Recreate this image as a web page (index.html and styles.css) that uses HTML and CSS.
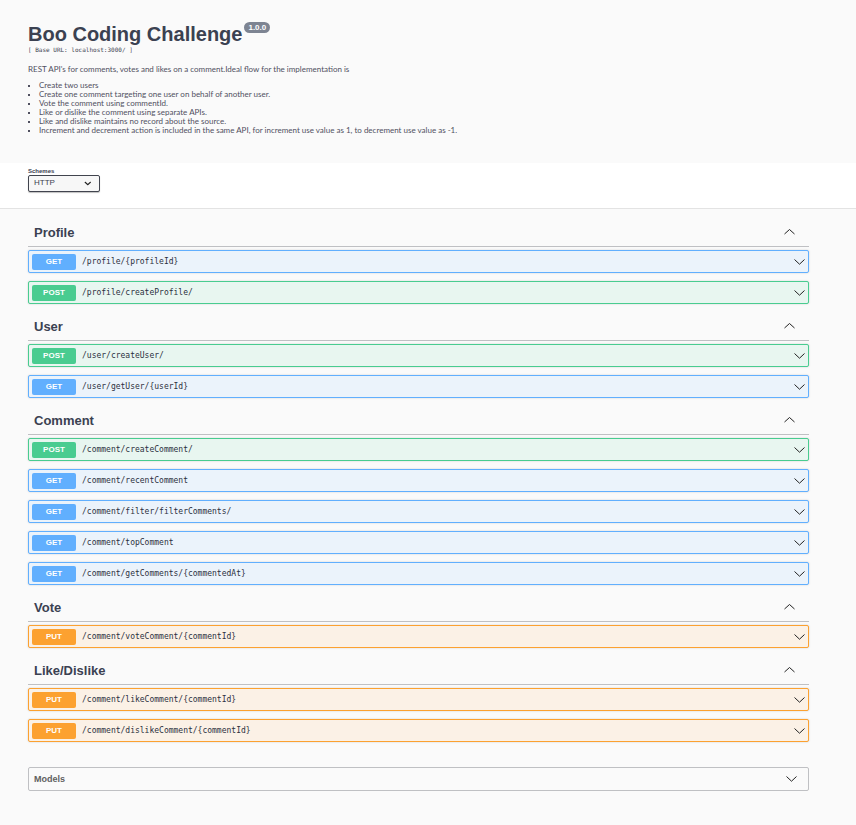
FILE: index.html
```html
<!DOCTYPE html>
<html lang="en">
<head>
<meta charset="utf-8">
<meta name="viewport" content="width=device-width, initial-scale=1">
<title>Boo Coding Challenge</title>
<link rel="stylesheet" href="styles.css">
</head>
<body>
<svg class="sprite" aria-hidden="true">
  <symbol id="down" viewBox="0 0 12 8"><path d="M1.5 1.5 6.5 6.2 11.5 1.5"/></symbol>
  <symbol id="up" viewBox="0 0 12 8"><path d="M1.5 6 6.5 1.5 11.5 6"/></symbol>
</svg>
<header class="info wrap">
  <h1 class="title">Boo Coding Challenge<span class="version">1.0.0</span></h1>
  <p class="base-url">[ Base URL: localhost:3000/ ]</p>
  <p class="intro">REST API's for comments, votes and likes on a comment.Ideal flow for the implementation is</p>
  <ul class="steps">
    <li>Create two users</li>
    <li>Create one comment targeting one user on behalf of another user.</li>
    <li>Vote the comment using commentId.</li>
    <li>Like or dislike the comment using separate APIs.</li>
    <li>Like and dislike maintains no record about the source.</li>
    <li>Increment and decrement action is included in the same API, for increment use value as 1, to decrement use value as -1.</li>
  </ul>
</header>
<div class="schemes wrap">
  <label class="schemes-label" for="scheme">Schemes</label>
  <div class="select-box">
    <select id="scheme"><option>HTTP</option></select>
    <svg class="select-arrow" viewBox="0 0 12 8" aria-hidden="true"><use href="#down"/></svg>
  </div>
</div>
<main class="wrap api">
  <section>
    <h2><button class="tag" type="button">Profile<svg class="chevron"><use href="#up"/></svg></button></h2>
    <button class="op get" type="button"><span class="method">GET</span><span class="path">/profile/{profileId}</span><svg class="chevron"><use href="#down"/></svg></button>
    <button class="op post" type="button"><span class="method">POST</span><span class="path">/profile/createProfile/</span><svg class="chevron"><use href="#down"/></svg></button>
  </section>
  <section>
    <h2><button class="tag" type="button">User<svg class="chevron"><use href="#up"/></svg></button></h2>
    <button class="op post" type="button"><span class="method">POST</span><span class="path">/user/createUser/</span><svg class="chevron"><use href="#down"/></svg></button>
    <button class="op get" type="button"><span class="method">GET</span><span class="path">/user/getUser/{userId}</span><svg class="chevron"><use href="#down"/></svg></button>
  </section>
  <section>
    <h2><button class="tag" type="button">Comment<svg class="chevron"><use href="#up"/></svg></button></h2>
    <button class="op post" type="button"><span class="method">POST</span><span class="path">/comment/createComment/</span><svg class="chevron"><use href="#down"/></svg></button>
    <button class="op get" type="button"><span class="method">GET</span><span class="path">/comment/recentComment</span><svg class="chevron"><use href="#down"/></svg></button>
    <button class="op get" type="button"><span class="method">GET</span><span class="path">/comment/filter/filterComments/</span><svg class="chevron"><use href="#down"/></svg></button>
    <button class="op get" type="button"><span class="method">GET</span><span class="path">/comment/topComment</span><svg class="chevron"><use href="#down"/></svg></button>
    <button class="op get" type="button"><span class="method">GET</span><span class="path">/comment/getComments/{commentedAt}</span><svg class="chevron"><use href="#down"/></svg></button>
  </section>
  <section>
    <h2><button class="tag" type="button">Vote<svg class="chevron"><use href="#up"/></svg></button></h2>
    <button class="op put" type="button"><span class="method">PUT</span><span class="path">/comment/voteComment/{commentId}</span><svg class="chevron"><use href="#down"/></svg></button>
  </section>
  <section>
    <h2><button class="tag" type="button">Like/Dislike<svg class="chevron"><use href="#up"/></svg></button></h2>
    <button class="op put" type="button"><span class="method">PUT</span><span class="path">/comment/likeComment/{commentId}</span><svg class="chevron"><use href="#down"/></svg></button>
    <button class="op put" type="button"><span class="method">PUT</span><span class="path">/comment/dislikeComment/{commentId}</span><svg class="chevron"><use href="#down"/></svg></button>
  </section>
  <button class="models" type="button">Models<svg class="chevron"><use href="#down"/></svg></button>
</main>
</body>
</html>
```
FILE: styles.css
```css
* { box-sizing: border-box; }
body {
  margin: 0;
  background: #fafafa;
  color: #3b4151;
  font-family: "Liberation Sans", Arial, sans-serif;
}
h1, h2, p, ul { margin: 0; }
button, select { font-family: inherit; color: inherit; }
button { cursor: pointer; }
.sprite { position: absolute; width: 0; height: 0; }
.wrap { padding-left: 28px; padding-right: 47px; }

.info { padding-top: 22px; padding-bottom: 28px; font-size: 8px; line-height: 9px; }
.title { display: flex; align-items: flex-start; gap: 2px; font-size: 20px; line-height: 24px; }
.version {
  padding: 0 4px;
  border-radius: 6px;
  background: #7d8492;
  color: #fff;
  font-size: 8px;
  line-height: 11px;
}
.base-url { font-family: "DejaVu Sans Mono", monospace; font-size: 6px; line-height: 8px; }
.intro, .steps { color: #50505f; font-family: Lato, Arial, sans-serif; }
.intro { margin-top: 11px; }
.steps { margin-top: 7px; padding-left: 11px; list-style: square; }
.steps li::marker { font-family: "Liberation Sans", Arial, sans-serif; font-size: 7px; }

.schemes {
  padding-top: 5px;
  padding-bottom: 16px;
  background: #fff;
  border-bottom: 1px solid #e3e3e3;
}
.schemes-label { display: block; font-size: 6px; font-weight: bold; line-height: 7px; }
.select-box { position: relative; width: 72px; }
.select-box select {
  display: block;
  width: 100%;
  height: 17px;
  padding: 0 5px 2px;
  appearance: none;
  border: 1px solid #41444e;
  border-radius: 2px;
  background: #f7f7f7;
  box-shadow: 0 1px 1px rgba(0, 0, 0, .25);
  font-size: 8px;
}
.select-arrow { position: absolute; right: 9px; top: 6px; width: 7px; height: 5px; stroke-width: 2; pointer-events: none; }

svg { fill: none; stroke: #222; }
.chevron { flex: none; width: 12px; height: 8px; }

.api { padding-top: 9px; padding-bottom: 34px; }
.tag {
  display: flex;
  align-items: center;
  justify-content: space-between;
  width: 100%;
  height: 29px;
  margin-bottom: 3px;
  padding: 0 14px 0 6px;
  border: 0;
  border-bottom: 1px solid #bfc0c3;
  background: none;
  font-size: 13px;
  font-weight: bold;
}
.op {
  display: flex;
  align-items: center;
  gap: 6px;
  width: 100%;
  height: 23px;
  margin-bottom: 8px;
  padding: 0 3px;
  border: 1px solid;
  border-radius: 2px;
  box-shadow: 0 0 2px rgba(0, 0, 0, .19);
}
.method {
  width: 44px;
  border-radius: 2px;
  color: #fff;
  font-size: 8px;
  font-weight: bold;
  line-height: 16px;
  text-align: center;
}
.path {
  flex: 1;
  color: #2b3040;
  font-family: "DejaVu Sans Mono", monospace;
  font-size: 8px;
  text-align: left;
}
.get { border-color: #61affe; background: #ebf3fb; }
.get .method { background: #61affe; }
.post { border-color: #49cc90; background: #e8f6f0; }
.post .method { background: #49cc90; }
.put { border-color: #fca130; background: #fbf1e6; }
.put .method { background: #fca130; }
.models {
  display: flex;
  align-items: center;
  justify-content: space-between;
  width: 100%;
  height: 24px;
  margin-top: 25px;
  padding: 0 11px 0 5px;
  border: 1px solid #bfc0c3;
  border-radius: 2px;
  background: none;
  color: #606060;
  font-size: 9px;
  font-weight: bold;
}
```
